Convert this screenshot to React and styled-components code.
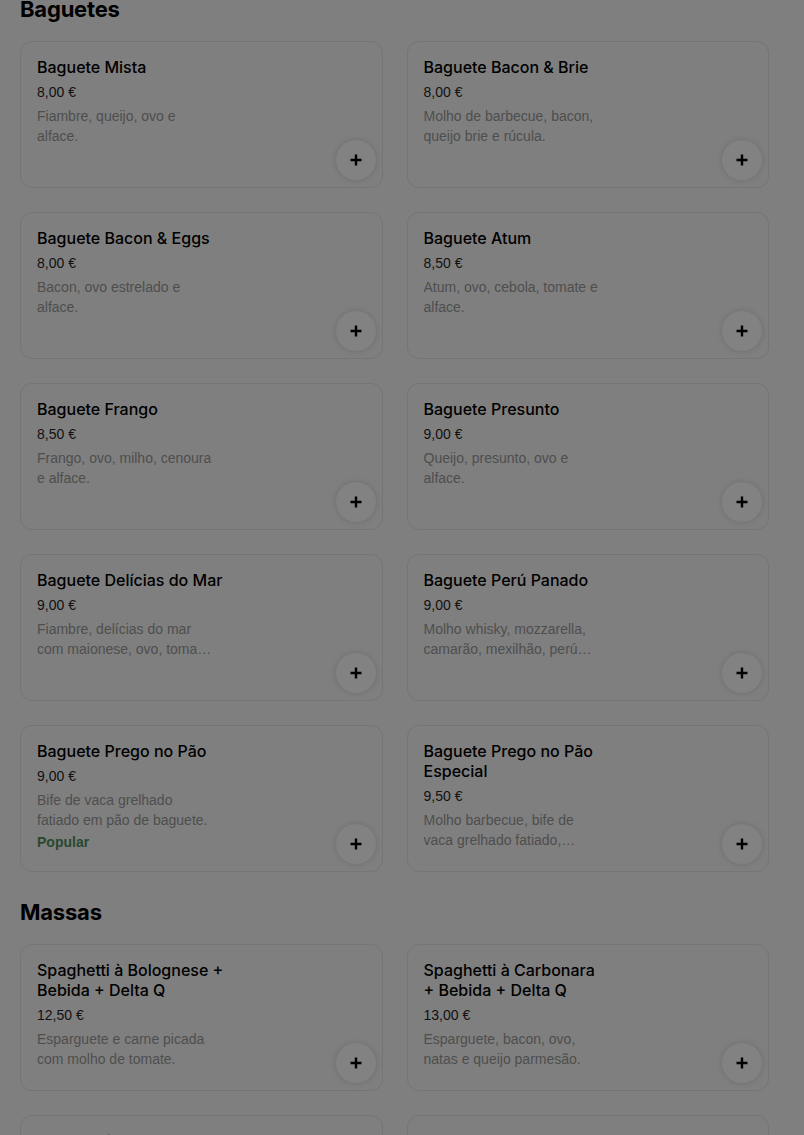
import React from 'react';
import styled, { createGlobalStyle } from 'styled-components';

const GlobalStyle = createGlobalStyle`
  html, body {
    margin: 0;
    padding: 0;
    background: #7f7f7f;
    overflow: hidden;
  }
  * {
    box-sizing: border-box;
  }
`;

// la page est vue déjà un peu défilée, d'où la marge négative
const Page = styled.main`
  width: 789px;
  padding: 0 20px;
  margin-top: -7px;
  font-family: "Liberation Sans", Arial, sans-serif;
  color: #000;
`;

const Section = styled.section`
  margin-bottom: 24px;
`;

const SectionTitle = styled.h2`
  margin: 0 0 16px;
  font-family: Inter, "Liberation Sans", sans-serif;
  font-size: 22px;
  line-height: 32px;
  font-weight: 700;
  letter-spacing: -0.2px;
  color: #000;
`;

const Grid = styled.div`
  display: grid;
  grid-template-columns: 1fr 1fr;
  column-gap: 24px;
  row-gap: 24px;
`;

const Card = styled.div`
  display: flex;
  justify-content: space-between;
  height: 147px;
  padding: 15px 6px 7px 16px;
  border: 1px solid #757575;
  border-radius: 12px;
  background: #7f7f7f;
`;

const Info = styled.div`
  display: flex;
  flex-direction: column;
  width: 190px;
`;

const Name = styled.div`
  font-family: Inter, "Liberation Sans", sans-serif;
  font-size: 16px;
  line-height: 20px;
  font-weight: 500;
  color: #000;
`;

const Price = styled.div`
  margin-top: 5px;
  font-size: 14px;
  line-height: 20px;
  color: #111;
`;

const Description = styled.div`
  max-width: 178px;
  margin-top: 4px;
  font-size: 14px;
  line-height: 20px;
  color: #4e4e4e;
  display: -webkit-box;
  -webkit-line-clamp: 2;
  -webkit-box-orient: vertical;
  overflow: hidden;
`;

const Tag = styled.div`
  margin-top: 2px;
  font-size: 14px;
  line-height: 20px;
  font-weight: 700;
  color: #27492f;
`;

const AddButton = styled.button`
  align-self: flex-end;
  flex-shrink: 0;
  width: 40px;
  height: 40px;
  border: none;
  border-radius: 50%;
  padding: 0;
  display: flex;
  align-items: center;
  justify-content: center;
  background: #828282;
  box-shadow: 0 0 6px rgba(0, 0, 0, 0.14);
  color: #000;
  cursor: pointer;
`;

const PlusIcon = () => (
	<svg width="14" height="14" viewBox="0 0 14 14" fill="none">
		<path d="M7 1.5v11M1.5 7h11" stroke="currentColor" strokeWidth="2.4" />
	</svg>
);

const menu = [
	{
		title: 'Baguetes',
		items: [
			{ name: 'Baguete Mista', price: '8,00 €', desc: 'Fiambre, queijo, ovo e alface.' },
			{ name: 'Baguete Bacon & Brie', price: '8,00 €', desc: 'Molho de barbecue, bacon, queijo brie e rúcula.' },
			{ name: 'Baguete Bacon & Eggs', price: '8,00 €', desc: 'Bacon, ovo estrelado e alface.' },
			{ name: 'Baguete Atum', price: '8,50 €', desc: 'Atum, ovo, cebola, tomate e alface.' },
			{ name: 'Baguete Frango', price: '8,50 €', desc: 'Frango, ovo, milho, cenoura e alface.' },
			{ name: 'Baguete Presunto', price: '9,00 €', desc: 'Queijo, presunto, ovo e alface.' },
			{ name: 'Baguete Delícias do Mar', price: '9,00 €', desc: 'Fiambre, delícias do mar com maionese, ovo, tomate e alface.' },
			{ name: 'Baguete Perú Panado', price: '9,00 €', desc: 'Molho whisky, mozzarella, camarão, mexilhão, perú panado e alface.' },
			{ name: 'Baguete Prego no Pão', price: '9,00 €', desc: 'Bife de vaca grelhado fatiado em pão de baguete.', tag: 'Popular' },
			{ name: 'Baguete Prego no Pão Especial', price: '9,50 €', desc: 'Molho barbecue, bife de vaca grelhado fatiado, queijo e alface.' },
		],
	},
	{
		title: 'Massas',
		items: [
			{ name: 'Spaghetti à Bolognese + Bebida + Delta Q', price: '12,50 €', desc: 'Esparguete e carne picada com molho de tomate.' },
			{ name: 'Spaghetti à Carbonara +\u00a0Bebida + Delta Q', price: '13,00 €', desc: 'Esparguete, bacon, ovo, natas e queijo parmesão.' },
			{ name: 'Lasanha à Bolonhesa + Bebida + Delta Q', price: '12,50 €', desc: 'Lasanha de carne com molho bechamel.' },
			{ name: 'Lasanha de Atum + Bebida + Delta Q', price: '12,50 €', desc: 'Lasanha de atum com molho bechamel.' },
		],
	},
];

const MenuItem = ({ item }) => (
	<Card>
		<Info>
			<Name>{item.name}</Name>
			<Price>{item.price}</Price>
			<Description>{item.desc}</Description>
			{item.tag && <Tag>{item.tag}</Tag>}
		</Info>
		<AddButton aria-label={`Adicionar ${item.name}`}>
			<PlusIcon />
		</AddButton>
	</Card>
);

const App = () => {
	return (
		<>
			<GlobalStyle />
			<Page>
				{menu.map(section => (
					<Section key={section.title}>
						<SectionTitle>{section.title}</SectionTitle>
						<Grid>
							{section.items.map(item => (
								<MenuItem key={item.name} item={item} />
							))}
						</Grid>
					</Section>
				))}
			</Page>
		</>
	);
};

export default App;
